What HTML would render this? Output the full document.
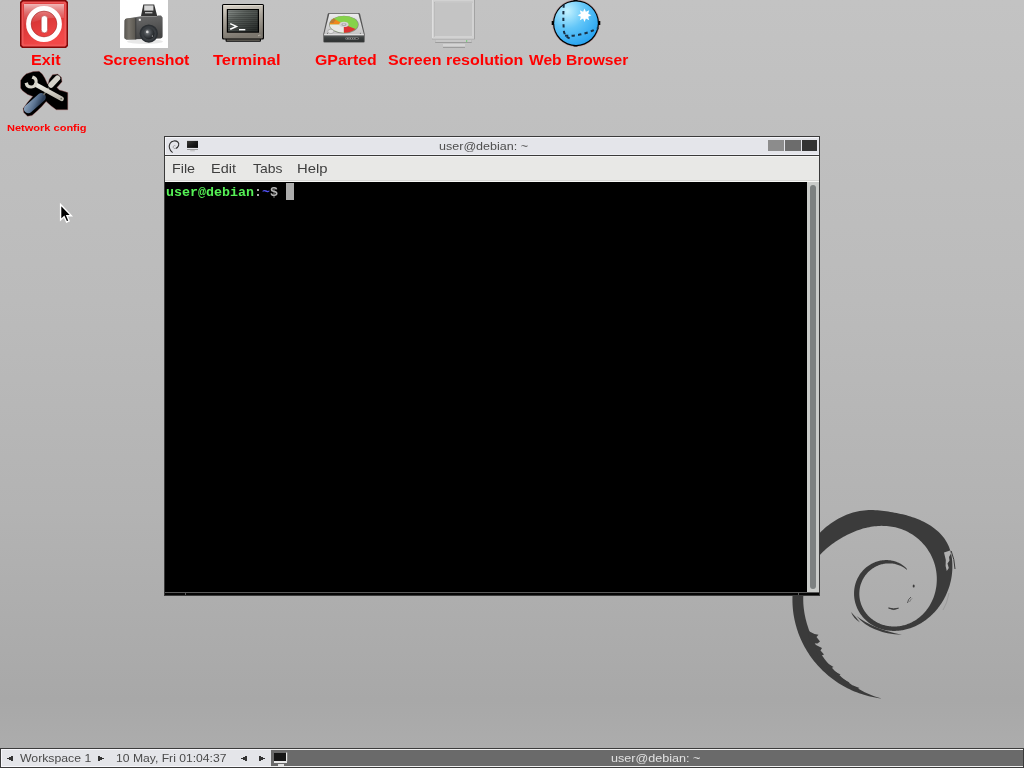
<!DOCTYPE html>
<html><head><meta charset="utf-8">
<style>
html,body{margin:0;padding:0;}
body{width:1024px;height:768px;overflow:hidden;position:relative;
 background:linear-gradient(to bottom,#c3c3c3 0px,#bbbbbb 300px,#b3b3b3 510px,#ababab 650px,#a8a8a8 700px,#acacac 745px,#adadad 768px);
 font-family:"Liberation Sans",sans-serif;}
.abs{position:absolute;}
svg.abs{overflow:visible;}
.lbl{position:absolute;color:#f00;font-weight:bold;font-size:14px;white-space:nowrap;line-height:14px;transform-origin:0 0;}
#win{position:absolute;left:164px;top:136px;width:656px;height:460px;background:#3a3a3a;}
#title{position:absolute;left:1px;top:1px;width:654px;height:18px;background:#e4e5ea;border-top:1px solid #f6f6fa;border-left:1px solid #f6f6fa;box-sizing:border-box;}
#title .hl{position:absolute;left:0;right:0;bottom:0;height:1px;background:#eeeff4;}
#menubar{position:absolute;left:1px;top:20px;width:654px;height:26px;background:#e8e8e6;box-sizing:border-box;border-top:1px solid #f4f4f2;}
#menubar .l1{position:absolute;left:0;right:0;top:23px;height:1px;background:#d6d6d4;}
#menubar .l2{position:absolute;left:0;right:0;top:24px;height:1px;background:#f6f6f4;}
.mi{position:absolute;top:6px;font-size:13.3px;line-height:14px;color:#3c3c3c;white-space:nowrap;transform-origin:0 0;}
#term{position:absolute;left:1px;top:46px;width:642px;height:410px;background:#000;}
#sb{position:absolute;left:643px;top:46px;width:12px;height:410px;background:#c9cbc9;}
#slider{position:absolute;left:3px;top:3px;width:6px;height:404px;background:#7c8080;border-radius:3px;}
#bot{position:absolute;left:1px;top:456px;width:654px;height:1px;background:#5a5a5a;}
#bot2{position:absolute;left:1px;top:457px;width:654px;height:2px;background:#050505;}
.mono{position:absolute;will-change:transform;font-family:"Liberation Mono",monospace;font-weight:bold;font-size:13.33px;line-height:16px;white-space:pre;}
#taskbar{position:absolute;left:0;top:748px;width:1024px;height:20px;background:#3c3c3c;}
#tbl{position:absolute;left:1px;top:1px;width:270px;height:18px;background:#e4e5e9;border-top:1px solid #f8f8fc;border-left:1px solid #f8f8fc;box-sizing:border-box;}
#tbr{position:absolute;left:271px;top:1px;width:752px;height:18px;background:#6a6a6a;border-top:1px solid #f0f0f0;border-bottom:1px solid #f0f0f0;box-sizing:border-box;}
#tbl .bl{position:absolute;left:-1px;right:0;bottom:0;height:1px;background:#f8f8fc;}
.tt{position:absolute;font-size:10.5px;line-height:12px;color:#4a4a4a;white-space:nowrap;transform-origin:0 0;}
.tx{position:absolute;line-height:20px;white-space:nowrap;transform-origin:0 0;will-change:transform;}
</style></head><body>

<!-- debian swirl -->
<svg class="abs" style="left:0;top:0" width="1024" height="768">
 <path d="M907.15,569.66 L906.80,568.77 L906.23,568.17 L905.65,567.59 L905.04,567.03 L904.41,566.48 L903.76,565.95 L903.09,565.44 L902.40,564.96 L901.70,564.49 L900.97,564.04 L900.24,563.61 L899.48,563.21 L898.71,562.83 L897.93,562.47 L897.13,562.13 L896.32,561.82 L895.50,561.54 L894.67,561.27 L893.83,561.04 L892.98,560.82 L892.12,560.64 L891.25,560.48 L890.38,560.34 L889.50,560.23 L888.61,560.15 L887.73,560.09 L886.84,560.06 L885.94,560.06 L885.05,560.08 L884.15,560.13 L883.26,560.21 L882.37,560.31 L881.47,560.44 L880.59,560.59 L879.70,560.78 L878.82,560.98 L877.94,561.22 L877.08,561.47 L876.21,561.76 L875.36,562.07 L874.51,562.40 L873.68,562.76 L872.85,563.14 L872.03,563.54 L871.23,563.97 L870.44,564.42 L869.66,564.89 L868.89,565.39 L868.14,565.91 L867.40,566.45 L866.67,567.00 L865.97,567.58 L865.28,568.18 L864.60,568.80 L863.95,569.43 L863.31,570.09 L862.69,570.76 L862.09,571.45 L861.50,572.15 L860.94,572.87 L860.40,573.60 L859.88,574.35 L859.38,575.11 L858.90,575.89 L858.44,576.67 L858.01,577.47 L857.59,578.28 L857.20,579.10 L856.83,579.93 L856.48,580.77 L856.16,581.61 L855.86,582.47 L855.58,583.33 L855.32,584.19 L855.09,585.06 L854.88,585.94 L854.69,586.82 L854.53,587.71 L854.39,588.59 L854.27,589.48 L854.18,590.37 L854.11,591.27 L854.06,592.16 L854.04,593.05 L854.04,593.94 L854.06,594.83 L854.10,595.72 L854.17,596.60 L854.25,597.49 L854.36,598.36 L854.49,599.24 L854.65,600.11 L854.82,600.97 L855.02,601.83 L855.23,602.68 L855.47,603.53 L855.73,604.37 L856.00,605.20 L856.30,606.02 L856.62,606.83 L856.95,607.64 L857.30,608.43 L857.68,609.22 L858.07,610.00 L858.48,610.76 L858.90,611.52 L859.34,612.26 L859.80,612.99 L860.28,613.71 L860.77,614.42 L861.28,615.12 L861.80,615.80 L862.34,616.47 L862.90,617.13 L863.46,617.77 L864.05,618.40 L864.64,619.02 L865.25,619.62 L865.87,620.21 L866.51,620.79 L867.15,621.35 L867.81,621.89 L868.48,622.42 L869.17,622.94 L869.86,623.44 L870.56,623.92 L871.28,624.39 L872.00,624.84 L872.74,625.28 L873.48,625.70 L874.23,626.11 L874.99,626.50 L875.77,626.88 L876.54,627.23 L877.33,627.58 L878.13,627.90 L878.93,628.21 L879.74,628.51 L880.55,628.78 L881.38,629.04 L882.21,629.29 L883.04,629.51 L883.89,629.72 L884.73,629.92 L885.59,630.09 L886.45,630.25 L887.31,630.39 L888.18,630.52 L889.05,630.62 L889.93,630.71 L890.82,630.79 L891.70,630.84 L892.59,630.88 L893.49,630.90 L894.39,630.91 L895.29,630.89 L896.19,630.86 L897.10,630.81 L898.01,630.75 L898.93,630.66 L899.85,630.56 L900.77,630.44 L901.69,630.31 L902.61,630.15 L903.54,629.98 L904.47,629.79 L905.40,629.57 L906.33,629.35 L907.27,629.10 L908.21,628.83 L909.15,628.54 L910.09,628.24 L911.03,627.91 L911.97,627.57 L912.91,627.20 L913.86,626.81 L914.80,626.41 L915.75,625.98 L916.69,625.53 L917.64,625.06 L918.58,624.56 L919.52,624.04 L920.47,623.51 L921.41,622.94 L922.35,622.36 L923.29,621.75 L924.23,621.11 L925.16,620.45 L926.09,619.77 L927.02,619.06 L927.94,618.33 L928.87,617.56 L929.78,616.78 L930.69,615.96 L931.60,615.12 L932.49,614.25 L933.39,613.35 L934.27,612.42 L935.15,611.46 L936.01,610.47 L936.87,609.46 L937.72,608.41 L938.55,607.33 L939.38,606.22 L940.19,605.08 L940.99,603.91 L941.77,602.70 L942.54,601.46 L943.29,600.19 L944.02,598.89 L944.74,597.55 L945.43,596.18 L946.10,594.78 L946.75,593.34 L947.37,591.87 L947.96,590.37 L948.53,588.83 L949.06,587.26 L949.56,585.66 L950.03,584.03 L950.46,582.36 L950.85,580.67 L951.20,578.94 L951.51,577.19 L951.77,575.41 L951.99,573.60 L952.17,571.77 L952.29,569.91 L952.37,568.03 L952.39,566.13 L952.36,564.21 L952.28,562.27 L952.13,560.32 L951.91,558.37 L951.62,556.41 L951.26,554.45 L950.81,552.50 L950.28,550.57 L949.66,548.66 L948.95,546.78 L948.15,544.94 L947.25,543.14 L946.26,541.40 L945.19,539.70 L944.03,538.06 L942.80,536.47 L941.50,534.94 L940.13,533.47 L938.70,532.05 L937.21,530.69 L935.67,529.39 L934.08,528.14 L932.45,526.95 L930.77,525.81 L929.06,524.73 L927.32,523.70 L925.54,522.72 L923.74,521.79 L921.91,520.91 L920.06,520.07 L918.18,519.28 L916.29,518.53 L914.38,517.82 L912.45,517.16 L910.51,516.53 L908.55,515.93 L906.58,515.37 L904.60,514.85 L902.60,514.35 L900.59,513.88 L898.57,513.44 L896.54,513.03 L894.49,512.63 L892.43,512.26 L890.35,511.91 L888.26,511.57 L886.14,511.26 L884.01,510.97 L881.86,510.71 L879.70,510.48 L877.51,510.30 L875.31,510.16 L873.09,510.08 L870.86,510.06 L868.62,510.10 L866.37,510.21 L864.12,510.39 L861.87,510.65 L859.63,511.00 L857.40,511.43 L855.17,511.94 L852.97,512.53 L850.78,513.20 L848.61,513.95 L846.46,514.77 L844.34,515.66 L842.25,516.63 L840.18,517.66 L838.14,518.76 L836.14,519.92 L834.17,521.15 L832.23,522.43 L830.33,523.77 L828.46,525.17 L826.63,526.62 L824.84,528.12 L823.09,529.67 L821.38,531.27 L819.70,532.92 L818.07,534.60 L816.48,536.33 L814.93,538.11 L813.42,539.92 L811.96,541.77 L810.55,543.67 L809.18,545.60 L807.86,547.56 L806.58,549.56 L805.36,551.60 L804.19,553.67 L803.07,555.77 L802.00,557.90 L800.98,560.06 L800.02,562.24 L799.11,564.46 L798.26,566.69 L797.47,568.95 L796.73,571.24 L796.04,573.54 L795.42,575.86 L794.85,578.20 L794.34,580.56 L793.89,582.93 L793.50,585.31 L793.17,587.71 L792.90,590.11 L792.69,592.53 L792.54,594.95 L792.45,597.37 L792.43,599.81 L792.46,602.24 L792.56,604.67 L792.71,607.11 L792.93,609.54 L793.21,611.97 L793.55,614.39 L793.95,616.81 L794.41,619.21 L794.94,621.61 L795.52,624.00 L796.16,626.37 L796.87,628.73 L797.63,631.08 L798.45,633.40 L799.34,635.71 L800.28,637.99 L801.27,640.26 L802.33,642.50 L803.44,644.72 L804.61,646.91 L805.84,649.07 L807.12,651.20 L808.45,653.31 L809.84,655.38 L811.28,657.41 L812.77,659.42 L814.31,661.38 L815.91,663.31 L817.55,665.21 L819.24,667.06 L820.98,668.87 L822.76,670.64 L824.59,672.37 L826.47,674.05 L828.39,675.68 L830.35,677.27 L832.35,678.82 L834.39,680.31 L836.47,681.75 L838.59,683.14 L840.74,684.49 L842.93,685.77 L845.15,687.01 L847.41,688.19 L849.70,689.31 L852.01,690.38 L854.36,691.40 L856.73,692.35 L859.12,693.25 L861.54,694.09 L863.99,694.87 L866.45,695.58 L868.94,696.24 L871.44,696.84 L873.96,697.37 L876.50,697.85 L879.05,698.26 L881.61,698.60 L884.17,699.11 L884.17,699.11 L881.61,698.62 L879.09,697.86 L876.60,697.04 L874.15,696.16 L871.73,695.23 L869.35,694.25 L867.00,693.22 L864.69,692.14 L862.42,691.01 L860.19,689.84 L857.99,688.62 L855.84,687.35 L853.73,686.05 L851.66,684.70 L849.63,683.31 L847.64,681.89 L845.69,680.43 L843.79,678.93 L841.93,677.40 L840.11,675.84 L838.34,674.24 L836.61,672.61 L834.92,670.96 L833.28,669.27 L831.68,667.56 L830.13,665.82 L828.62,664.06 L827.15,662.27 L825.72,660.46 L824.34,658.63 L823.00,656.78 L821.71,654.91 L820.46,653.02 L819.25,651.11 L818.08,649.19 L816.96,647.24 L815.88,645.29 L814.84,643.31 L813.84,641.33 L812.88,639.33 L811.96,637.31 L811.09,635.29 L810.25,633.25 L809.46,631.20 L808.70,629.14 L807.99,627.07 L807.33,624.98 L806.71,622.89 L806.13,620.78 L805.60,618.67 L805.13,616.55 L804.70,614.41 L804.32,612.27 L804.00,610.12 L803.73,607.97 L803.52,605.81 L803.36,603.65 L803.27,601.49 L803.23,599.33 L803.25,597.17 L803.34,595.01 L803.48,592.86 L803.70,590.71 L803.97,588.58 L804.31,586.46 L804.72,584.35 L805.20,582.26 L805.74,580.19 L806.35,578.14 L807.03,576.12 L807.78,574.12 L808.60,572.16 L809.48,570.23 L810.44,568.34 L811.46,566.49 L812.54,564.68 L813.68,562.91 L814.87,561.19 L816.11,559.51 L817.40,557.88 L818.74,556.29 L820.11,554.75 L821.53,553.26 L822.97,551.81 L824.45,550.41 L825.95,549.06 L827.47,547.75 L829.02,546.48 L830.59,545.26 L832.17,544.07 L833.76,542.93 L835.36,541.82 L836.98,540.75 L838.60,539.71 L840.23,538.70 L841.86,537.73 L843.51,536.79 L845.16,535.89 L846.82,535.02 L848.49,534.19 L850.17,533.40 L851.86,532.63 L853.55,531.91 L855.25,531.22 L856.97,530.57 L858.69,529.96 L860.41,529.39 L862.15,528.86 L863.89,528.37 L865.63,527.92 L867.38,527.51 L869.14,527.15 L870.90,526.83 L872.66,526.55 L874.43,526.32 L876.19,526.14 L877.96,526.00 L879.73,525.91 L881.49,525.87 L883.25,525.88 L885.00,525.93 L886.75,526.04 L888.49,526.20 L890.22,526.41 L891.94,526.67 L893.64,526.98 L895.33,527.35 L897.01,527.77 L898.66,528.24 L900.29,528.76 L901.91,529.33 L903.49,529.95 L905.06,530.61 L906.59,531.33 L908.10,532.09 L909.57,532.89 L911.02,533.73 L912.43,534.62 L913.81,535.54 L915.15,536.50 L916.46,537.50 L917.73,538.53 L918.97,539.59 L920.16,540.69 L921.32,541.82 L922.43,542.97 L923.51,544.15 L924.54,545.36 L925.54,546.59 L926.49,547.83 L927.39,549.10 L928.26,550.39 L929.08,551.70 L929.86,553.02 L930.60,554.35 L931.29,555.69 L931.94,557.05 L932.55,558.41 L933.11,559.78 L933.64,561.16 L934.12,562.54 L934.56,563.92 L934.96,565.30 L935.31,566.69 L935.63,568.07 L935.91,569.45 L936.15,570.82 L936.35,572.19 L936.52,573.56 L936.64,574.91 L936.74,576.26 L936.79,577.60 L936.81,578.93 L936.80,580.25 L936.76,581.55 L936.68,582.84 L936.58,584.12 L936.44,585.39 L936.28,586.64 L936.09,587.87 L935.87,589.09 L935.63,590.29 L935.36,591.48 L935.06,592.65 L934.74,593.80 L934.40,594.93 L934.04,596.04 L933.65,597.14 L933.24,598.22 L932.81,599.28 L932.35,600.32 L931.88,601.34 L931.39,602.34 L930.88,603.32 L930.36,604.28 L929.81,605.22 L929.25,606.14 L928.68,607.04 L928.09,607.92 L927.48,608.77 L926.86,609.61 L926.22,610.43 L925.58,611.22 L924.92,612.00 L924.25,612.75 L923.56,613.48 L922.87,614.20 L922.17,614.89 L921.45,615.56 L920.73,616.20 L920.00,616.83 L919.26,617.44 L918.51,618.03 L917.76,618.59 L917.00,619.14 L916.23,619.66 L915.46,620.16 L914.68,620.65 L913.89,621.11 L913.11,621.55 L912.31,621.98 L911.52,622.38 L910.72,622.77 L909.92,623.13 L909.11,623.47 L908.31,623.80 L907.50,624.10 L906.69,624.39 L905.88,624.66 L905.07,624.91 L904.25,625.14 L903.44,625.35 L902.63,625.55 L901.82,625.72 L901.01,625.88 L900.20,626.02 L899.39,626.14 L898.58,626.24 L897.78,626.33 L896.98,626.40 L896.18,626.45 L895.38,626.49 L894.58,626.51 L893.79,626.51 L893.00,626.50 L892.22,626.47 L891.44,626.42 L890.66,626.36 L889.89,626.28 L889.12,626.19 L888.36,626.08 L887.60,625.95 L886.85,625.81 L886.10,625.66 L885.36,625.49 L884.62,625.30 L883.89,625.10 L883.17,624.89 L882.45,624.66 L881.74,624.42 L881.04,624.16 L880.34,623.89 L879.65,623.60 L878.97,623.30 L878.29,622.99 L877.62,622.66 L876.96,622.32 L876.31,621.97 L875.67,621.60 L875.04,621.22 L874.41,620.83 L873.79,620.42 L873.19,620.00 L872.59,619.57 L872.00,619.12 L871.43,618.67 L870.86,618.20 L870.30,617.72 L869.76,617.23 L869.22,616.72 L868.70,616.20 L868.19,615.68 L867.69,615.14 L867.20,614.59 L866.73,614.03 L866.26,613.46 L865.81,612.87 L865.37,612.28 L864.95,611.68 L864.54,611.07 L864.14,610.45 L863.76,609.81 L863.39,609.17 L863.04,608.53 L862.70,607.87 L862.37,607.20 L862.06,606.53 L861.77,605.85 L861.49,605.16 L861.23,604.46 L860.98,603.76 L860.75,603.05 L860.54,602.34 L860.34,601.62 L860.16,600.89 L860.00,600.16 L859.85,599.42 L859.72,598.68 L859.61,597.94 L859.52,597.19 L859.44,596.44 L859.39,595.69 L859.35,594.93 L859.33,594.17 L859.32,593.41 L859.34,592.65 L859.38,591.89 L859.43,591.13 L859.50,590.37 L859.60,589.61 L859.71,588.86 L859.84,588.10 L859.99,587.35 L860.15,586.60 L860.34,585.85 L860.55,585.10 L860.77,584.36 L861.01,583.63 L861.28,582.90 L861.56,582.18 L861.86,581.46 L862.18,580.75 L862.52,580.05 L862.87,579.35 L863.25,578.66 L863.64,577.99 L864.05,577.32 L864.48,576.66 L864.92,576.01 L865.38,575.37 L865.86,574.75 L866.36,574.13 L866.87,573.53 L867.40,572.95 L867.95,572.37 L868.51,571.81 L869.08,571.26 L869.67,570.73 L870.28,570.22 L870.90,569.71 L871.53,569.23 L872.18,568.76 L872.83,568.31 L873.51,567.88 L874.19,567.46 L874.88,567.07 L875.59,566.69 L876.30,566.33 L877.03,565.99 L877.77,565.67 L878.51,565.37 L879.26,565.09 L880.02,564.83 L880.79,564.59 L881.56,564.37 L882.34,564.17 L883.12,564.00 L883.91,563.84 L884.70,563.71 L885.50,563.60 L886.30,563.51 L887.10,563.45 L887.90,563.41 L888.70,563.39 L889.51,563.39 L890.31,563.41 L891.11,563.46 L891.91,563.53 L892.70,563.62 L893.50,563.74 L894.28,563.87 L895.07,564.03 L895.84,564.21 L896.62,564.42 L897.38,564.64 L898.14,564.89 L898.88,565.16 L899.62,565.45 L900.35,565.76 L901.07,566.09 L901.78,566.44 L902.48,566.81 L903.16,567.20 L903.83,567.61 L904.49,568.04 L905.13,568.49 L905.76,568.95 L906.37,569.44 L907.15,569.66 Z" fill="#3b3b3b"/>
 <path d="M856.5,616 Q871,633.5 902,634.8 Q873,629 856.5,616 Z" fill="#3b3b3b"/>
 <path d="M851,612 Q853.5,618.5 860,622.5 Q855.5,616.5 851,612 Z" fill="#3b3b3b"/>
 <path d="M944,552.5 L950,550.5 L951,553.5 L949,557 L949.5,560.5 L947.5,563.5 L948.8,568 L946.8,571 L945.6,566 L945.8,560 Z" fill="#b1b1b1"/>
 <path d="M951.2,551 Q954.5,559 955,569" stroke="#3b3b3b" stroke-width="1" fill="none"/>
 <path d="M949,593 Q947,604 943,610" stroke="#888" stroke-width="0.5" fill="none"/>
 <path d="M807.5,630.5 L814.5,634 L818.5,634.8 L816.5,637 L820,641.5 L817.5,643.5 L810,643 Z" fill="#3b3b3b"/>
 <path d="M815,644.5 L822,648 L820.5,650.5 L824,654.5 L818,657 Z" fill="#3b3b3b"/>
 <path d="M825.5,662 L833.5,667 L827.5,670 Z" fill="#3b3b3b"/>
 <path d="M834,671 L840.5,674.5 L836,677.5 Z" fill="#3b3b3b"/>
 <path d="M843,679 L849.5,682.5 L845,685 Z" fill="#3b3b3b"/>
 <path d="M853,685.5 L859.5,688 L855,690.5 Z" fill="#3b3b3b"/>
 <ellipse cx="913.7" cy="586" rx="1" ry="1.6" fill="#3b3b3b"/>
 <path d="M907.5,603 Q908,599 911,597" stroke="#4a4a4a" stroke-width="0.9" fill="none"/><path d="M909.5,602 Q910.5,599.5 912,598.5" stroke="#555" stroke-width="0.6" fill="none"/>
 <path d="M888.5,608 Q893.5,611 898.5,608.2 Q893.5,609.5 888.5,608 Z" fill="#3b3b3b" stroke="#3b3b3b" stroke-width="0.8"/>
</svg>

<!-- Exit icon -->
<svg class="abs" style="left:20px;top:0" width="48" height="48" viewBox="0 0 48 48">
 <defs>
  <linearGradient id="exg" x1="0" y1="0" x2="0.4" y2="1"><stop offset="0" stop-color="#c42626"/><stop offset="1" stop-color="#f24848"/></linearGradient>
  <linearGradient id="exh" x1="0" y1="0" x2="0" y2="1"><stop offset="0" stop-color="#f0b8b8"/><stop offset="1" stop-color="#e07070" stop-opacity="0"/></linearGradient>
 </defs>
 <path d="M2,0 H46 L48,2 V46 L46,48 H2 L0,46 V2 Z" fill="#800808"/>
 <path d="M3,1.5 H45 L46.5,3 V45 L45,46.5 H3 L1.5,45 V3 Z" fill="#f05858"/>
 <rect x="3.5" y="3.5" width="41" height="41" rx="1.5" fill="url(#exg)"/>
 <path d="M4,4 H44 V18 Q24,16 4,26 Z" fill="url(#exh)"/>
 <circle cx="24" cy="24" r="15.4" fill="none" stroke="#fff" stroke-width="5"/>
 <circle cx="24" cy="24" r="12.9" fill="none" stroke="#9a1a1a" stroke-width="0.5"/>
 <rect x="21.2" y="15.6" width="6.4" height="17.3" rx="3.2" fill="#fff" stroke="#a02020" stroke-width="0.5"/>
</svg>

<!-- Screenshot icon -->
<svg class="abs" style="left:120px;top:0" width="48" height="48" viewBox="0 0 48 48">
 <defs>
  <linearGradient id="cbody" x1="0" y1="0" x2="0.3" y2="1"><stop offset="0" stop-color="#6e6e6e"/><stop offset="1" stop-color="#454545"/></linearGradient>
  <linearGradient id="cgrip" x1="0" y1="0" x2="1" y2="0"><stop offset="0" stop-color="#58554f"/><stop offset="0.4" stop-color="#77736b"/><stop offset="1" stop-color="#5a5750"/></linearGradient>
  <radialGradient id="clens" cx="0.4" cy="0.38" r="0.65"><stop offset="0" stop-color="#7a7e82"/><stop offset="0.5" stop-color="#44484c"/><stop offset="1" stop-color="#1c1f22"/></radialGradient>
 </defs>
 <rect x="0" y="0" width="48" height="48" fill="#fff"/>
 <ellipse cx="25" cy="41.6" rx="18" ry="2.4" fill="#e8e8e8"/>
 <path d="M23.3,4.6 H34.2 L37.2,16 H21 Z" fill="#333"/>
 <rect x="24.2" y="5.4" width="9.2" height="5.2" fill="#d6d6d6"/>
 <rect x="25" y="12" width="7.4" height="1.4" fill="#b8b8b8"/>
 <path d="M4.6,20.5 Q4.8,18.8 7,18.6 L21,16.2 H36.5 L38,15.4 H41 L42.6,17.5 V36.5 Q42.6,38.2 40.5,38.4 L8,39.6 Q4.5,39.6 4.5,37.5 Z" fill="url(#cbody)"/>
 <path d="M4.6,20.5 Q4.8,18.8 7,18.6 L15.5,17.8 V39.5 L8,39.6 Q4.5,39.6 4.5,37.5 Z" fill="url(#cgrip)"/>
 <rect x="15.3" y="18" width="1" height="21.5" fill="#3a3a3a"/>
 <rect x="18.8" y="18.8" width="2" height="2" fill="#f0f0f0"/>
 <circle cx="28.8" cy="33.6" r="9.2" fill="#2c3034"/>
 <circle cx="28.8" cy="33.6" r="7.6" fill="#3a3e42"/>
 <circle cx="28.8" cy="33.6" r="5.6" fill="url(#clens)"/>
 <circle cx="27.3" cy="31.9" r="1.3" fill="#d8d8d8"/>
 <circle cx="32.4" cy="36" r="0.6" fill="#e0e0e0"/>
</svg>

<!-- Terminal icon -->
<svg class="abs" style="left:222px;top:3px" width="43" height="40" viewBox="0 0 43 40">
 <defs>
  <linearGradient id="tfr" x1="0" y1="0" x2="0.2" y2="1"><stop offset="0" stop-color="#dcd6cc"/><stop offset="0.45" stop-color="#aaa49a"/><stop offset="1" stop-color="#7c776e"/></linearGradient>
  <linearGradient id="tsc" x1="0" y1="0" x2="0.8" y2="1"><stop offset="0" stop-color="#8a908c"/><stop offset="0.35" stop-color="#5c625e"/><stop offset="1" stop-color="#2a2e2c"/></linearGradient>
  <pattern id="scan" width="4" height="2" patternUnits="userSpaceOnUse"><rect width="4" height="1" fill="#000" fill-opacity="0.18"/></pattern>
 </defs>
 <rect x="3.6" y="34.5" width="35.3" height="4.3" rx="0.8" fill="#000"/>
 <rect x="4.6" y="35.3" width="33.3" height="2.5" fill="#6e6a62"/>
 <rect x="0" y="0.9" width="42" height="35.6" rx="1.5" fill="#000"/>
 <rect x="1.1" y="2" width="39.8" height="33.4" rx="1" fill="url(#tfr)"/>
 <rect x="1.1" y="2" width="39.8" height="0.8" fill="#eee8de" fill-opacity="0.7"/>
 <rect x="4.8" y="6" width="32.2" height="23.7" fill="#000"/>
 <rect x="6" y="7.1" width="29.8" height="21.5" fill="url(#tsc)"/>
 <rect x="6" y="7.1" width="29.8" height="21.5" fill="url(#scan)"/>
 <path d="M8.2,20.6 L14.4,23.4 L8.2,26.2" stroke="#fff" stroke-width="1.5" fill="none"/>
 <rect x="17" y="26" width="6.3" height="1.4" fill="#fff"/>
 <path d="M36,33 Q37,31.8 38.5,32.2" stroke="#d8d2c8" stroke-width="0.6" fill="none"/>
</svg>

<!-- GParted icon -->
<svg class="abs" style="left:322px;top:12px" width="44" height="32" viewBox="0 0 44 32">
 <defs>
  <linearGradient id="gtop" x1="0" y1="0" x2="0" y2="1"><stop offset="0" stop-color="#ececec"/><stop offset="1" stop-color="#c4c4c4"/></linearGradient>
  <linearGradient id="gbot" x1="0" y1="0" x2="0" y2="1"><stop offset="0" stop-color="#5a5e5e"/><stop offset="0.4" stop-color="#3a3e3e"/><stop offset="1" stop-color="#2e3131"/></linearGradient>
 </defs>
 <path d="M7.2,1.1 H36.6 Q37.8,1.1 38.2,2.4 L42.7,22 V29.6 Q42.7,30.6 41.6,30.6 H2.4 Q1.3,30.6 1.3,29.6 V22 L5.6,2.4 Q6,1.1 7.2,1.1 Z" fill="#555"/>
 <path d="M7.4,1.8 H36.4 L41.9,22.4 H2.1 Z" fill="url(#gtop)"/>
 <rect x="2.1" y="23.3" width="39.8" height="6.6" fill="url(#gbot)"/>
 <rect x="2.1" y="22.2" width="39.8" height="1.1" fill="#f4f4f4"/>
 <ellipse cx="21.9" cy="12.6" rx="14.8" ry="8.9" fill="#8a8a8a"/>
 <ellipse cx="21.9" cy="12.4" rx="14.1" ry="8.3" fill="#86d24a"/>
 <path d="M21.9,12.4 L7.8,12.4 A14.1,8.3 0 0 1 11.8,6.6 Z" fill="#f0881c"/>
 <path d="M21.9,12.4 L21.9,20.7 A14.1,8.3 0 0 1 7.8,12.4 Z" fill="#e8e8e8"/>
 <path d="M21.9,12.4 L33.6,17.0 A14.1,8.3 0 0 1 21.9,20.7 Z" fill="#dc3232"/>
 <path d="M7.9,11 A14.1,8.3 0 0 1 11.8,6.6 L14,8 A10,6 0 0 0 11.5,11 Z" fill="#606060" fill-opacity="0.35"/>
 <ellipse cx="21.9" cy="12.4" rx="4.6" ry="2.7" fill="#d4d4d4"/>
 <ellipse cx="21.9" cy="12.4" rx="2.6" ry="1.5" fill="#a8a8a8"/>
 <ellipse cx="21.9" cy="12.2" rx="1.4" ry="0.8" fill="#d8d8d8"/>
 <ellipse cx="8.8" cy="19.4" rx="3" ry="2.2" fill="#e4e4e4" stroke="#8a8a8a" stroke-width="0.5"/>
 <circle cx="5.5" cy="21.2" r="0.5" fill="#555"/>
 <circle cx="38.3" cy="21.2" r="0.5" fill="#555"/>
 <rect x="23.2" y="25.6" width="13.6" height="1.9" rx="0.95" fill="#8e9090"/>
 <circle cx="24.3" cy="26.55" r="0.55" fill="#2a2a2a"/><circle cx="27.1" cy="26.55" r="0.55" fill="#2a2a2a"/><circle cx="29.5" cy="26.55" r="0.55" fill="#2a2a2a"/><circle cx="31.7" cy="26.55" r="0.55" fill="#2a2a2a"/>
 <rect x="33.6" y="26" width="2.2" height="1.1" fill="#2a2a2a"/>
</svg>

<!-- Screen resolution icon -->
<svg class="abs" style="left:432px;top:0" width="44" height="48" viewBox="0 0 44 48">
 <rect x="0" y="-1" width="42.8" height="40.3" fill="#9c9c9c"/>
 <rect x="0" y="-1" width="42" height="39.5" fill="#e2e2e2"/>
 <rect x="0.8" y="0" width="41.2" height="38.5" fill="#d2d2d2"/>
 <rect x="2.2" y="1.8" width="38.5" height="34.8" fill="#a6a6a6"/>
 <rect x="2.8" y="2.4" width="37.9" height="34.2" fill="#e4e4e4"/>
 <rect x="2.8" y="2.4" width="37.3" height="33.6" fill="#c4c4c4"/>
 <rect x="3.2" y="40" width="36.5" height="2.7" fill="#8c8c8c"/>
 <rect x="3.2" y="40" width="36.5" height="2" fill="#c8c8c8"/>
 <rect x="11" y="44" width="22" height="3.7" fill="#8e8e8e"/>
 <rect x="11" y="44" width="22" height="2.8" fill="#d4d4d4"/>
 <rect x="34.2" y="40.4" width="1" height="1.2" fill="#3ad03a"/>
</svg>

<!-- Web browser icon -->
<svg class="abs" style="left:552px;top:0" width="48" height="48" viewBox="0 0 48 48">
 <defs>
  <radialGradient id="glb" cx="0.3" cy="0.22" r="0.9"><stop offset="0" stop-color="#c4f2ff"/><stop offset="0.45" stop-color="#62c6f8"/><stop offset="1" stop-color="#1f9ef0"/></radialGradient>
 </defs>
 <circle cx="24" cy="23.2" r="23.3" fill="none" stroke="#c07070" stroke-width="0.6" stroke-opacity="0.7"/>
 <circle cx="24" cy="23.2" r="23" fill="#000"/>
 <rect x="21.5" y="-0.5" width="4" height="2" fill="#000"/>
 <rect x="-0.3" y="21" width="2" height="4" fill="#000"/>
 <rect x="46.3" y="21" width="2" height="4" fill="#000"/>
 <rect x="21.5" y="44.5" width="4" height="2" fill="#000"/>
 <circle cx="24" cy="23.2" r="21.8" fill="url(#glb)"/>
 <path d="M11.8,4.5 Q10.8,18 12,32 Q13.5,37 18,38.5" stroke="#1a3045" stroke-width="2" stroke-dasharray="3.3,3.3" fill="none"/>
 <path d="M13,35.5 Q28,37 46.5,28" stroke="#1a3045" stroke-width="2" stroke-dasharray="3.3,3.3" fill="none"/>
 <path d="M32.5,8.4 L33.9,11.8 L37.2,10.2 L36.2,13.7 L39.4,15.2 L36.2,16.7 L37.2,20.2 L33.9,18.6 L32.5,22 L31.1,18.6 L27.8,20.2 L28.8,16.7 L25.6,15.2 L28.8,13.7 L27.8,10.2 L31.1,11.8 Z" fill="#fff"/>
</svg>

<!-- Network config icon -->
<svg class="abs" style="left:20px;top:71px" width="49" height="46" viewBox="0 0 49 46">
 <defs>
  <linearGradient id="sdh" x1="0" y1="0" x2="1" y2="0.4"><stop offset="0" stop-color="#90a6be"/><stop offset="0.6" stop-color="#5a7290"/><stop offset="1" stop-color="#2e4058"/></linearGradient>
  <linearGradient id="wrg" x1="0" y1="0" x2="0" y2="1"><stop offset="0" stop-color="#ecebe4"/><stop offset="1" stop-color="#b8b4a8"/></linearGradient>
 </defs>
 <path d="M0.55,9.5 L3.1,5.7 L6.3,2.8 L13.3,0.55 L19.1,0.2 L22.3,3.1 L24.8,6.9 L27.4,12.7 L28,13.3 L29.3,8.2 L32.5,3.7 L37.6,3.1 L41.4,6.3 L42,10.8 L38.8,14.6 L36.9,16.5 L39.5,19.1 L44,20.3 L47.8,21.6 L47.8,38.8 L36.3,38.8 L31.2,35 L26.1,30.5 L21.6,35.7 L17.1,40.1 L12,44.6 L7.6,45.2 L3.7,41.4 L3.1,37.6 L7.6,31.2 L12.7,25.4 L7.6,23.5 L2.5,19.7 L0.55,17.1 Z" fill="#000" stroke="#b06060" stroke-width="0.4"/>
 <path d="M8.2,38 L21.5,26.2" stroke="url(#sdh)" stroke-width="8.6" stroke-linecap="round"/>
 <path d="M23.5,24 L28.8,16.8" stroke="#6a6a62" stroke-width="1.6"/>
 <path d="M31,14 L37.5,7.2" stroke="#d4d2ca" stroke-width="5.5" stroke-linecap="round"/>
 <path d="M16,13.8 L41.6,27.8" stroke="url(#wrg)" stroke-width="4.6" stroke-linecap="round"/>
 <path d="M12.9,4.6 A6.6,6.6 0 1 1 4.6,12.2 L8,11.2 A3.3,3.3 0 1 0 11.6,7.8 Z" fill="#d8d5ca"/>
 <circle cx="41.2" cy="27.6" r="0.9" fill="#6a6a62"/>
</svg>



<!-- terminal window -->
<div id="win">
 <div id="title"><div class="hl"></div>
  <svg class="abs" style="left:1px;top:2px" width="15" height="15" viewBox="0 0 15 15">
   <path d="M8.8,8.4 C11.6,7.4 12.8,3.8 10.8,2 C9,0.4 4.8,0.2 3,3.4 C1.6,6 2.2,10.2 5.6,12.6" stroke="#2e2e2e" stroke-width="1.05" fill="none"/>
   <path d="M8.8,8.4 C7.4,9 6,8.2 6.2,6.8 C6.4,5.6 7.6,5.2 8.4,5.8" stroke="#9a9a9a" stroke-width="0.9" fill="none"/>
  </svg>
  <svg class="abs" style="left:20px;top:2px" width="13" height="13" viewBox="0 0 13 13">
   <defs><linearGradient id="mscr" x1="0" y1="0" x2="1" y2="1"><stop offset="0" stop-color="#3c3c38"/><stop offset="0.5" stop-color="#1a1a1a"/><stop offset="1" stop-color="#050505"/></linearGradient></defs>
   <rect x="1" y="0.9" width="11" height="7" fill="url(#mscr)"/>
   <rect x="1" y="9.2" width="11" height="0.8" fill="#8a8a8a"/>
   <rect x="4.2" y="10.3" width="4.6" height="1" fill="#b8b8b8"/>
  </svg>
  <div class="abs" style="left:602px;top:2px;width:16px;height:11px;background:#8c8c8c"></div>
  <div class="abs" style="left:619px;top:2px;width:16px;height:11px;background:#6c6c6c"></div>
  <div class="abs" style="left:636px;top:2px;width:15px;height:11px;background:#333"></div>
 </div>
 <div id="menubar"><div class="l1"></div><div class="l2"></div>
 </div>
 <div id="term">
  <div class="mono" style="left:1px;top:3px"><span style="color:#55f055">user@debian</span><span style="color:#b4b4b4">:</span><span style="color:#5050f0">~</span><span style="color:#b4b4b4">$ </span></div>
  <div class="abs" style="left:121px;top:1px;width:8px;height:17px;background:#acacac"></div>
 </div>
 <div id="sb"><div id="slider"></div></div>
 <div id="bot"></div><div id="bot2"></div>
 <div class="abs" style="left:21px;top:456px;width:1px;height:3px;background:#5a5a5a"></div>
 <div class="abs" style="left:634px;top:456px;width:1px;height:3px;background:#5a5a5a"></div>
</div>

<!-- taskbar -->
<div id="taskbar">
 <div id="tbl"><div class="bl"></div>
 </div>
 <div id="tbr">
  <svg class="abs" style="left:2px;top:1px" width="16" height="16" viewBox="0 0 16 16">
   <rect x="1" y="2" width="12" height="8" fill="#151515"/>
   <rect x="1" y="10" width="13" height="2" fill="#e8e8e8"/>
   <rect x="13" y="1.5" width="1.2" height="9" fill="#e8e8e8"/>
   <rect x="5" y="13" width="6" height="2" fill="#e0e0e0"/>
  </svg>
 </div>
</div>

<!-- texts -->
<div class="tx" id="L1" style="left:30.9px;top:50px;font:bold 14px/20px 'Liberation Sans',sans-serif;color:#f00;transform:scaleX(1.15)">Exit</div>
<div class="tx" id="L2" style="left:102.87px;top:50px;font:bold 14px/20px 'Liberation Sans',sans-serif;color:#f00;transform:scaleX(1.133)">Screenshot</div>
<div class="tx" id="L3" style="left:213.0px;top:50px;font:bold 14px/20px 'Liberation Sans',sans-serif;color:#f00;transform:scaleX(1.18)">Terminal</div>
<div class="tx" id="L4" style="left:315.47px;top:50px;font:bold 14px/20px 'Liberation Sans',sans-serif;color:#f00;transform:scaleX(1.132)">GParted</div>
<div class="tx" id="L5" style="left:387.85px;top:50px;font:bold 14px/20px 'Liberation Sans',sans-serif;color:#f00;transform:scaleX(1.145)">Screen resolution</div>
<div class="tx" id="L6" style="left:529.4px;top:50px;font:bold 14px/20px 'Liberation Sans',sans-serif;color:#f00;transform:scaleX(1.112)">Web Browser</div>
<div class="tx" id="L7" style="left:6.75px;top:117.9px;font:bold 9.6px/20px 'Liberation Sans',sans-serif;color:#f00;transform:scaleX(1.1485)">Network config</div>
<div class="tx" id="ttl" style="left:438.66px;top:135.7px;font:11.5px/20px 'Liberation Sans',sans-serif;color:#4e4e4e;transform:scaleX(1.09)">user@debian: ~</div>
<div class="tx" id="m1" style="left:172.44px;top:159.2px;font:13.5px/20px 'Liberation Sans',sans-serif;color:#3e3e3e;transform:scaleX(1.06)">File</div>
<div class="tx" id="m2" style="left:210.71px;top:159.2px;font:13.5px/20px 'Liberation Sans',sans-serif;color:#3e3e3e;transform:scaleX(1.07)">Edit</div>
<div class="tx" id="m3" style="left:252.5px;top:159.2px;font:13.5px/20px 'Liberation Sans',sans-serif;color:#3e3e3e;transform:scaleX(1.03)">Tabs</div>
<div class="tx" id="m4" style="left:296.57px;top:159.2px;font:13.5px/20px 'Liberation Sans',sans-serif;color:#3e3e3e;transform:scaleX(1.1)">Help</div>
<div class="tx" id="t1" style="left:20.0px;top:747.5px;font:10.5px/20px 'Liberation Sans',sans-serif;color:#4a4a4a;transform:scaleX(1.1667)">Workspace 1</div>
<div class="tx" id="t2" style="left:116.34px;top:747.5px;font:10.5px/20px 'Liberation Sans',sans-serif;color:#4a4a4a;transform:scaleX(1.1569)">10 May, Fri 01:04:37</div>
<div class="tx" id="t3" style="left:611.4px;top:747.5px;font:10.5px/20px 'Liberation Sans',sans-serif;color:#e2e2e2;transform:scaleX(1.1973)">user@debian: ~</div>
<!-- arrows -->
<div class="abs" style="left:7px;top:758px;width:2px;height:1px;background:#333"></div><div class="abs" style="left:9px;top:757px;width:2px;height:3px;background:#333"></div><div class="abs" style="left:11px;top:756px;width:2px;height:5px;background:#333"></div>
<div class="abs" style="left:98px;top:756px;width:2px;height:5px;background:#333"></div><div class="abs" style="left:100px;top:757px;width:2px;height:3px;background:#333"></div><div class="abs" style="left:102px;top:758px;width:2px;height:1px;background:#333"></div>
<div class="abs" style="left:241px;top:758px;width:2px;height:1px;background:#333"></div><div class="abs" style="left:243px;top:757px;width:2px;height:3px;background:#333"></div><div class="abs" style="left:245px;top:756px;width:2px;height:5px;background:#333"></div>
<div class="abs" style="left:259px;top:756px;width:2px;height:5px;background:#333"></div><div class="abs" style="left:261px;top:757px;width:2px;height:3px;background:#333"></div><div class="abs" style="left:263px;top:758px;width:2px;height:1px;background:#333"></div>
<!-- mouse cursor -->
<svg class="abs" style="left:59px;top:203px" width="16" height="22" viewBox="0 0 16 22">
 <path d="M1.6,1.4 V16.9 L5.1,13.7 L7.6,19 L10.1,17.9 L7.9,12.8 H12.4 Z" fill="#000" stroke="#fff" stroke-width="1.4" stroke-linejoin="miter"/>
</svg>
</body></html>
